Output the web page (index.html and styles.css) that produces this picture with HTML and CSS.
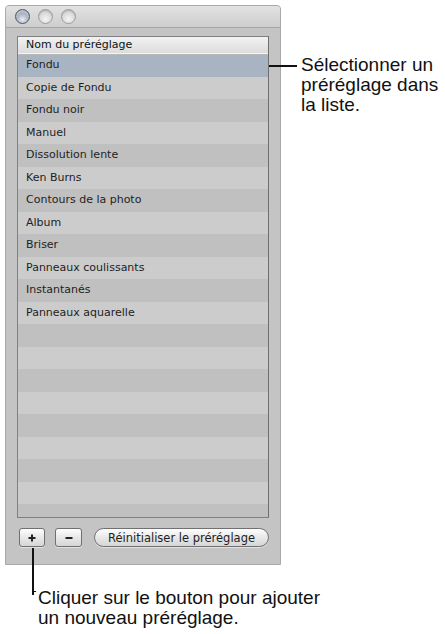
FILE: index.html
```html
<!DOCTYPE html>
<html lang="fr">
<head>
<meta charset="utf-8">
<title>Préréglages</title>
<link rel="stylesheet" href="styles.css">
</head>
<body>
<div class="page">
  <div class="window">
    <div class="titlebar">
      <span class="light light-active"></span>
      <span class="light"></span>
      <span class="light"></span>
    </div>
    <div class="content">
      <div class="list">
        <div class="list-header">Nom du préréglage</div>
        <div class="rows">
          <div class="row selected">Fondu</div>
          <div class="row">Copie de Fondu</div>
          <div class="row">Fondu noir</div>
          <div class="row">Manuel</div>
          <div class="row">Dissolution lente</div>
          <div class="row">Ken Burns</div>
          <div class="row">Contours de la photo</div>
          <div class="row">Album</div>
          <div class="row">Briser</div>
          <div class="row">Panneaux coulissants</div>
          <div class="row">Instantanés</div>
          <div class="row">Panneaux aquarelle</div>
          <div class="row"></div>
          <div class="row"></div>
          <div class="row"></div>
          <div class="row"></div>
          <div class="row"></div>
          <div class="row"></div>
          <div class="row"></div>
          <div class="row"></div>
          <div class="row"></div>
          <div class="row"></div>
        </div>
      </div>
      <div class="toolbar">
        <button class="btn btn-sq" type="button" aria-label="Ajouter">
          <svg width="8" height="8" viewBox="0 0 8 8"><path d="M4 0.5V7.5M0.5 4H7.5" stroke="#222" stroke-width="2"/></svg>
        </button>
        <button class="btn btn-sq btn-minus" type="button" aria-label="Supprimer">
          <svg width="8" height="8" viewBox="0 0 8 8"><path d="M0.5 4H7.5" stroke="#222" stroke-width="2"/></svg>
        </button>
        <button class="btn btn-pill" type="button">Réinitialiser le préréglage</button>
      </div>
    </div>
  </div>
  <div class="note note-right">Sélectionner un<br>préréglage dans<br>la liste.</div>
  <div class="note note-bottom">Cliquer sur le bouton pour ajouter<br>un nouveau préréglage.</div>
  <span class="leader leader-right"></span>
  <span class="leader leader-bottom"></span>
  <span class="leader leader-tick"></span>
</div>
</body>
</html>
```
FILE: styles.css
```css
* { box-sizing: border-box; }
html, body { margin: 0; padding: 0; background: #ffffff; }
body { width: 445px; height: 634px; overflow: hidden; }

.page {
  position: relative;
  display: grid;
  grid-template-columns: 276px 1fr;
  grid-template-rows: auto auto;
  padding: 5px 0 0 5px;
}

.window {
  grid-column: 1;
  grid-row: 1;
  width: 276px;
  height: 560px;
  background: #c4c4c4;
  border: 1px solid #a9a9a9;
  border-radius: 4px 4px 0 0;
  display: flex;
  flex-direction: column;
}

.titlebar {
  height: 22px;
  flex: none;
  display: flex;
  align-items: center;
  gap: 8px;
  padding-left: 9px;
  background: linear-gradient(#e2e2e2, #cdcdcd);
  border-bottom: 1px solid #a6a6a6;
  border-radius: 3px 3px 0 0;
}

.light {
  width: 15px;
  height: 15px;
  border-radius: 50%;
  border: 1px solid #9c9c9c;
  background: radial-gradient(circle at 50% 70%, #f4f4f4 0%, #dadada 55%, #c2c2c2 100%);
  box-shadow: inset 0 1px 1px rgba(0,0,0,0.15);
}

.light-active {
  border-color: #4f5966;
  background: radial-gradient(circle at 50% 72%, #e6edf4 0%, #a9b3c0 50%, #6b7583 100%);
  box-shadow: inset 0 2px 2px rgba(255,255,255,0.5);
}

.content {
  flex: 1;
  padding: 8px 11px 0 11px;
  display: flex;
  flex-direction: column;
}

.list {
  height: 482px;
  border: 1px solid #808080;
  border-right-color: #6f6f6f;
  display: flex;
  flex-direction: column;
  overflow: hidden;
  font-family: "DejaVu Sans", "Liberation Sans", sans-serif;
  font-size: 11px;
  color: #1e1e1e;
}

.list-header {
  height: 17px;
  flex: none;
  padding-left: 8px;
  line-height: 16px;
  color: #111111;
  background: linear-gradient(#f2f2f2, #dcdcdc);
  border-bottom: 1px solid #f4f4f4;
  box-shadow: 0 1px 0 #b8b8b8;
  position: relative;
  z-index: 1;
}

.rows {
  flex: 1;
  overflow: hidden;
}

.row {
  height: 22.5px;
  line-height: 22.5px;
  padding-left: 8px;
  background: #c0c0c0;
  white-space: nowrap;
}

.row:nth-child(even) { background: #cccccc; }
.row.selected { background: #a9b4c3; }

.toolbar {
  display: flex;
  align-items: center;
  gap: 10px;
  margin-top: 10px;
  padding-left: 2px;
}

.btn {
  height: 19px;
  padding: 0;
  border: 1px solid #707070;
  background: linear-gradient(#fdfdfd, #e6e6e6 55%, #d6d6d6);
  box-shadow: 0 1px 0 rgba(255,255,255,0.5);
  display: flex;
  align-items: center;
  justify-content: center;
  font-family: "DejaVu Sans", "Liberation Sans", sans-serif;
  font-size: 11.5px;
  color: #1e1e1e;
}

.btn-sq { width: 26px; border-radius: 3px; }
.btn-minus { width: 27px; }
.btn-pill {
  width: 175px;
  margin-left: 2px;
  border-radius: 10px;
}

.note {
  font-family: "Liberation Sans", Arial, sans-serif;
  font-size: 19px;
  line-height: 20px;
  color: #111111;
  white-space: nowrap;
}

.note-right {
  grid-column: 2;
  grid-row: 1;
  padding: 50px 0 0 20px;
}

.note-bottom {
  grid-column: 1 / span 2;
  grid-row: 2;
  margin-top: 23px;
  padding-left: 33px;
}

.leader {
  position: absolute;
  background: #111111;
}

.leader-right { left: 269px; top: 65px; width: 28px; height: 2px; }
.leader-bottom { left: 32px; top: 548px; width: 2px; height: 47px; }
.leader-tick { left: 33px; top: 591px; width: 3px; height: 1px; }
```
